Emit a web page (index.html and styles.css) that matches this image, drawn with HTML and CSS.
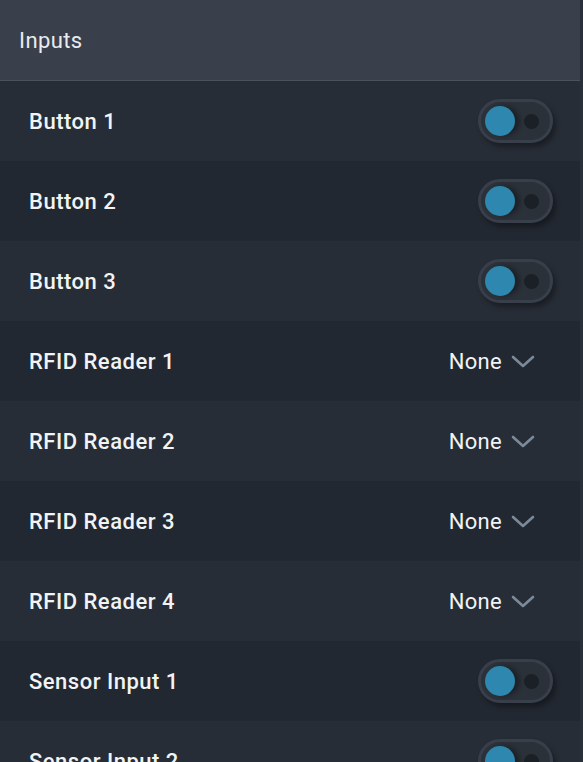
FILE: index.html
```html
<!DOCTYPE html>
<html>
<head>
  <meta charset="UTF-8">
  <title>Inputs</title>
  <link rel="stylesheet" href="styles.css">
</head>
<body>
  <div class="panel">
    <div class="panel-header">Inputs</div>

    <div class="row">
      <span class="label">Button 1</span>
      <span class="toggle"><span class="knob"></span><span class="dot"></span></span>
    </div>
    <div class="row">
      <span class="label">Button 2</span>
      <span class="toggle"><span class="knob"></span><span class="dot"></span></span>
    </div>
    <div class="row">
      <span class="label">Button 3</span>
      <span class="toggle"><span class="knob"></span><span class="dot"></span></span>
    </div>

    <div class="row">
      <span class="label">RFID Reader 1</span>
      <span class="select">None
        <svg class="chevron" width="24" height="14" viewBox="0 0 24 14"><path d="M2 2 L12 11 L22 2" fill="none" stroke="#7a8a9c" stroke-width="2.6" stroke-linecap="round" stroke-linejoin="round"/></svg>
      </span>
    </div>
    <div class="row">
      <span class="label">RFID Reader 2</span>
      <span class="select">None
        <svg class="chevron" width="24" height="14" viewBox="0 0 24 14"><path d="M2 2 L12 11 L22 2" fill="none" stroke="#7a8a9c" stroke-width="2.6" stroke-linecap="round" stroke-linejoin="round"/></svg>
      </span>
    </div>
    <div class="row">
      <span class="label">RFID Reader 3</span>
      <span class="select">None
        <svg class="chevron" width="24" height="14" viewBox="0 0 24 14"><path d="M2 2 L12 11 L22 2" fill="none" stroke="#7a8a9c" stroke-width="2.6" stroke-linecap="round" stroke-linejoin="round"/></svg>
      </span>
    </div>
    <div class="row">
      <span class="label">RFID Reader 4</span>
      <span class="select">None
        <svg class="chevron" width="24" height="14" viewBox="0 0 24 14"><path d="M2 2 L12 11 L22 2" fill="none" stroke="#7a8a9c" stroke-width="2.6" stroke-linecap="round" stroke-linejoin="round"/></svg>
      </span>
    </div>

    <div class="row">
      <span class="label">Sensor Input 1</span>
      <span class="toggle"><span class="knob"></span><span class="dot"></span></span>
    </div>
    <div class="row">
      <span class="label">Sensor Input 2</span>
      <span class="toggle"><span class="knob"></span><span class="dot"></span></span>
    </div>
  </div>
</body>
</html>
```

FILE: styles.css
```css
html, body {
  margin: 0;
  height: 100%;
  overflow: hidden;
}

body {
  font-family: Roboto, "Noto Sans", sans-serif;
  background: #2a3039;
  color: #f2f3f5;
}

.panel {
  width: 580px;
}

.panel-header {
  height: 80px;
  display: flex;
  align-items: center;
  padding-left: 19px;
  background: #3a404b;
  border-bottom: 1px solid #4b525d;
  font-size: 22px;
  font-weight: 400;
  letter-spacing: 0.4px;
  color: #e9ebee;
}

.row {
  height: 80px;
  display: flex;
  align-items: center;
  justify-content: space-between;
  padding: 0 28px 0 29px;
  background: #272d36;
}

.row:nth-child(odd) {
  background: #222831;
}

.label {
  font-size: 22px;
  font-weight: 500;
  letter-spacing: 0.5px;
}

.toggle {
  width: 69px;
  height: 38px;
  border: 3px solid #393f4a;
  border-radius: 24px;
  background: #2b3139;
  box-shadow: 3px 4px 5px rgba(0, 0, 0, 0.35);
  margin-right: -1px;
  display: flex;
  align-items: center;
}

.knob {
  width: 30px;
  height: 30px;
  margin-left: 4px;
  border-radius: 50%;
  background: #2d87ae;
  box-shadow: 5px 0 4px rgba(0, 0, 0, 0.3);
}

.dot {
  width: 15px;
  height: 15px;
  margin-left: 9px;
  border-radius: 50%;
  background: #1b2027;
}

.select {
  display: flex;
  align-items: center;
  gap: 9px;
  font-size: 22px;
  font-weight: 400;
  letter-spacing: 0.3px;
  margin-right: 17px;
}

.chevron {
  margin-top: 2px;
}
```
